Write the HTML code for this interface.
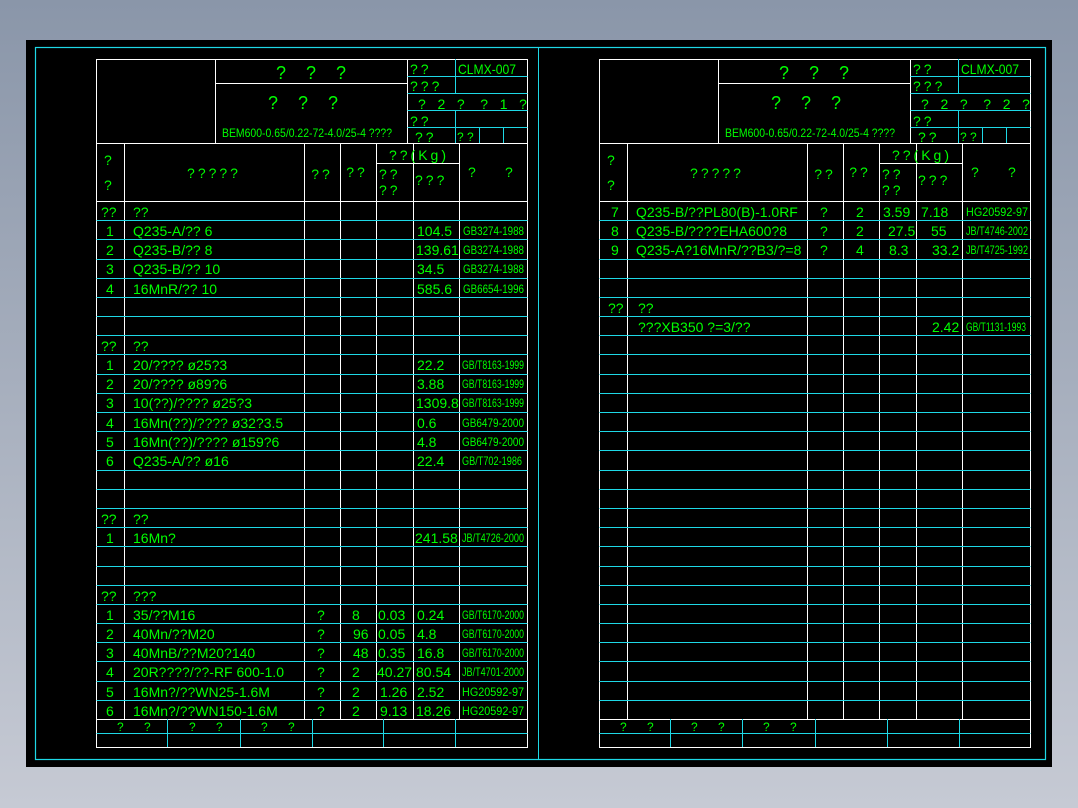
<!DOCTYPE html>
<html><head><meta charset="utf-8">
<style>
html,body{margin:0;padding:0}
body{width:1078px;height:808px;overflow:hidden;background:linear-gradient(#8a96a9,#c6cad4);}
svg{position:absolute;left:0;top:0}
text{font-family:"Liberation Sans Narrow","Liberation Sans",sans-serif;fill:#00ff00;font-size:14px;white-space:pre}
.h{font-size:18px}
.s{font-size:12px}
.w{letter-spacing:3px}
</style></head><body>
<svg width="1078" height="808" xmlns="http://www.w3.org/2000/svg">
<rect x="26" y="40" width="1026" height="727" fill="#000"/>
<rect x="35.5" y="47.5" width="1010" height="712" fill="none" stroke="#1ed8e6" stroke-width="1.2"/>
<line x1="538.5" y1="47" x2="538.5" y2="759" stroke="#1ed8e6"/>
<g id="grid"></g>

<!-- LEFT -->
<g>
<text class="h" x="311" y="79" text-anchor="middle">?    ?    ?</text>
<text class="h" x="303" y="109" text-anchor="middle">?    ?    ?</text>
<text class="s" x="222" y="137" textLength="170" lengthAdjust="spacingAndGlyphs">BEM600-0.65/0.22-72-4.0/25-4 ????</text>
<text x="410" y="74" class="w">??</text><text x="458" y="74" textLength="58" lengthAdjust="spacingAndGlyphs">CLMX-007</text>
<text x="410" y="91" class="w">???</text>
<text x="418" y="109">?   2   ?    ?   1   ?</text>
<text x="410" y="126" class="w">??</text>
<text x="415" y="142" class="w">??</text><text class="s" x="457" y="141">? ?</text>
<text x="104" y="165">?</text><text x="104" y="190">?</text>
<text x="214" y="178" text-anchor="middle" class="w">?????</text>
<text x="322" y="179" text-anchor="middle" class="w">??</text>
<text x="357" y="177" text-anchor="middle" class="w">??</text>
<text x="419" y="160" text-anchor="middle" class="w">??(Kg)</text>
<text x="379" y="179" class="w">??</text><text x="379" y="195" class="w">??</text>
<text x="415" y="185" class="w">???</text>
<text x="468" y="177">?</text><text x="505" y="177">?</text>
</g>

<!-- RIGHT header -->
<g transform="translate(503,0)">
<text class="h" x="311" y="79" text-anchor="middle">?    ?    ?</text>
<text class="h" x="303" y="109" text-anchor="middle">?    ?    ?</text>
<text class="s" x="222" y="137" textLength="170" lengthAdjust="spacingAndGlyphs">BEM600-0.65/0.22-72-4.0/25-4 ????</text>
<text x="410" y="74" class="w">??</text><text x="458" y="74" textLength="58" lengthAdjust="spacingAndGlyphs">CLMX-007</text>
<text x="410" y="91" class="w">???</text>
<text x="418" y="109">?   2   ?    ?   2   ?</text>
<text x="410" y="126" class="w">??</text>
<text x="415" y="142" class="w">??</text><text class="s" x="457" y="141">? ?</text>
<text x="104" y="165">?</text><text x="104" y="190">?</text>
<text x="214" y="178" text-anchor="middle" class="w">?????</text>
<text x="322" y="179" text-anchor="middle" class="w">??</text>
<text x="357" y="177" text-anchor="middle" class="w">??</text>
<text x="419" y="160" text-anchor="middle" class="w">??(Kg)</text>
<text x="379" y="179" class="w">??</text><text x="379" y="195" class="w">??</text>
<text x="415" y="185" class="w">???</text>
<text x="468" y="177">?</text><text x="505" y="177">?</text>
</g>

<!-- LEFT rows text -->
<g>
<text x="101" y="217">??</text><text x="133" y="217">??</text>
<text x="106" y="236">1</text><text x="133" y="236">Q235-A/?? 6</text><text x="417" y="236">104.5</text><text class="s" x="463" y="235" textLength="61" lengthAdjust="spacingAndGlyphs">GB3274-1988</text>
<text x="106" y="255">2</text><text x="133" y="255">Q235-B/?? 8</text><text x="416" y="255">139.61</text><text class="s" x="463" y="254" textLength="61" lengthAdjust="spacingAndGlyphs">GB3274-1988</text>
<text x="106" y="274">3</text><text x="133" y="274">Q235-B/?? 10</text><text x="417" y="274">34.5</text><text class="s" x="463" y="273" textLength="61" lengthAdjust="spacingAndGlyphs">GB3274-1988</text>
<text x="106" y="294">4</text><text x="133" y="294">16MnR/?? 10</text><text x="417" y="294">585.6</text><text class="s" x="463" y="293" textLength="61" lengthAdjust="spacingAndGlyphs">GB6654-1996</text>
<text x="101" y="351">??</text><text x="133" y="351">??</text>
<text x="106" y="370">1</text><text x="133" y="370">20/???? ø25?3</text><text x="417" y="370">22.2</text><text class="s" x="462" y="369" textLength="62" lengthAdjust="spacingAndGlyphs">GB/T8163-1999</text>
<text x="106" y="389">2</text><text x="133" y="389">20/???? ø89?6</text><text x="417" y="389">3.88</text><text class="s" x="462" y="388" textLength="62" lengthAdjust="spacingAndGlyphs">GB/T8163-1999</text>
<text x="106" y="408">3</text><text x="133" y="408">10(??)/???? ø25?3</text><text x="416" y="408">1309.8</text><text class="s" x="462" y="407" textLength="62" lengthAdjust="spacingAndGlyphs">GB/T8163-1999</text>
<text x="106" y="428">4</text><text x="133" y="428">16Mn(??)/???? ø32?3.5</text><text x="417" y="428">0.6</text><text class="s" x="462" y="427" textLength="62" lengthAdjust="spacingAndGlyphs">GB6479-2000</text>
<text x="106" y="447">5</text><text x="133" y="447">16Mn(??)/???? ø159?6</text><text x="417" y="447">4.8</text><text class="s" x="462" y="446" textLength="62" lengthAdjust="spacingAndGlyphs">GB6479-2000</text>
<text x="106" y="466">6</text><text x="133" y="466">Q235-A/?? ø16</text><text x="417" y="466">22.4</text><text class="s" x="462" y="465" textLength="60" lengthAdjust="spacingAndGlyphs">GB/T702-1986</text>
<text x="101" y="524">??</text><text x="133" y="524">??</text>
<text x="106" y="543">1</text><text x="133" y="543">16Mn?</text><text x="415" y="543">241.58</text><text class="s" x="462" y="542" textLength="62" lengthAdjust="spacingAndGlyphs">JB/T4726-2000</text>
<text x="101" y="601">??</text><text x="133" y="601">???</text>
<text x="106" y="620">1</text><text x="133" y="620">35/??M16</text><text x="317" y="620">?</text><text x="352" y="620">8</text><text x="378" y="620">0.03</text><text x="417" y="620">0.24</text><text class="s" x="462" y="619" textLength="62" lengthAdjust="spacingAndGlyphs">GB/T6170-2000</text>
<text x="106" y="639">2</text><text x="133" y="639">40Mn/??M20</text><text x="317" y="639">?</text><text x="353" y="639">96</text><text x="378" y="639">0.05</text><text x="417" y="639">4.8</text><text class="s" x="462" y="638" textLength="62" lengthAdjust="spacingAndGlyphs">GB/T6170-2000</text>
<text x="106" y="658">3</text><text x="133" y="658">40MnB/??M20?140</text><text x="317" y="658">?</text><text x="353" y="658">48</text><text x="378" y="658">0.35</text><text x="417" y="658">16.8</text><text class="s" x="462" y="657" textLength="62" lengthAdjust="spacingAndGlyphs">GB/T6170-2000</text>
<text x="106" y="677">4</text><text x="133" y="677">20R????/??-RF 600-1.0</text><text x="317" y="677">?</text><text x="352" y="677">2</text><text x="377" y="677">40.27</text><text x="416" y="677">80.54</text><text class="s" x="462" y="676" textLength="62" lengthAdjust="spacingAndGlyphs">JB/T4701-2000</text>
<text x="106" y="697">5</text><text x="133" y="697">16Mn?/??WN25-1.6M</text><text x="317" y="697">?</text><text x="352" y="697">2</text><text x="380" y="697">1.26</text><text x="417" y="697">2.52</text><text class="s" x="462" y="696" textLength="62" lengthAdjust="spacingAndGlyphs">HG20592-97</text>
<text x="106" y="716">6</text><text x="133" y="716">16Mn?/??WN150-1.6M</text><text x="317" y="716">?</text><text x="352" y="716">2</text><text x="380" y="716">9.13</text><text x="416" y="716">18.26</text><text class="s" x="462" y="715" textLength="62" lengthAdjust="spacingAndGlyphs">HG20592-97</text>
<text class="s" x="117" y="731">?</text><text class="s" x="144" y="731">?</text>
<text class="s" x="189" y="731">?</text><text class="s" x="216" y="731">?</text>
<text class="s" x="261" y="731">?</text><text class="s" x="288" y="731">?</text>
</g>

<!-- RIGHT rows text -->
<g>
<text x="611" y="217">7</text><text x="636" y="217">Q235-B/??PL80(B)-1.0RF</text><text x="820" y="217">?</text><text x="856" y="217">2</text><text x="883" y="217">3.59</text><text x="921" y="217">7.18</text><text class="s" x="966" y="216" textLength="62" lengthAdjust="spacingAndGlyphs">HG20592-97</text>
<text x="611" y="236">8</text><text x="636" y="236">Q235-B/????EHA600?8</text><text x="820" y="236">?</text><text x="856" y="236">2</text><text x="888" y="236">27.5</text><text x="931" y="236">55</text><text class="s" x="966" y="235" textLength="62" lengthAdjust="spacingAndGlyphs">JB/T4746-2002</text>
<text x="611" y="255">9</text><text x="636" y="255">Q235-A?16MnR/??B3/?=8</text><text x="820" y="255">?</text><text x="856" y="255">4</text><text x="889" y="255">8.3</text><text x="932" y="255">33.2</text><text class="s" x="966" y="254" textLength="62" lengthAdjust="spacingAndGlyphs">JB/T4725-1992</text>
<text x="608" y="313">??</text><text x="638" y="313">??</text>
<text x="638" y="332">???XB350 ?=3/??</text><text x="932" y="332">2.42</text><text class="s" x="966" y="331" textLength="60" lengthAdjust="spacingAndGlyphs">GB/T1131-1993</text>
<text class="s" x="620" y="731">?</text><text class="s" x="647" y="731">?</text>
<text class="s" x="691" y="731">?</text><text class="s" x="718" y="731">?</text>
<text class="s" x="763" y="731">?</text><text class="s" x="790" y="731">?</text>
</g>
</svg>
<script>
(function(){
var ns="http://www.w3.org/2000/svg",g=document.getElementById("grid");
var W="#ffffff",C="#1ed8e6";
function L(x1,y1,x2,y2,c){var l=document.createElementNS(ns,"line");
l.setAttribute("x1",x1);l.setAttribute("y1",y1);l.setAttribute("x2",x2);l.setAttribute("y2",y2);
l.setAttribute("stroke",c);l.setAttribute("stroke-width","1");g.appendChild(l);}
function table(o,fcols){
 var X=function(v){return v+o+0.5};
 L(X(0),59.5,X(431),59.5,W);L(X(0),59,X(0),748,W);L(X(431),59,X(431),748,W);L(X(0),747.5,X(431),747.5,W);
 L(X(119),59,X(119),143,W);L(X(311),59,X(311),143,W);L(X(119),83.5,X(311),83.5,W);
 L(X(0),143.5,X(431),143.5,W);
 [76.5,93.5,110.5,127.5].forEach(function(y){L(X(311),y,X(431),y,C);});
 L(X(359),59,X(359),93,C);L(X(359),110,X(359),143,C);L(X(383),127,X(383),143,C);L(X(407),127,X(407),143,C);
 var cols=[28,208,244,280,317,363];
 cols.forEach(function(c){L(X(c),143,X(c),719,W);});
 L(X(280),163.5,X(363),163.5,W);
 L(X(0),201.5,X(431),201.5,W);
 for(var i=1;i<27;i++){var y=Math.round(201+i*19.185)+0.5;L(X(0),y,X(431),y,C);}
 L(X(0),719.5,X(431),719.5,W);
 L(X(0),733.5,X(431),733.5,C);
 fcols.forEach(function(c){L(X(c),719,X(c),747,C);});
}
table(96,[71,144,216,287,359]);
table(599,[71,143,216,288,360]);
})();
</script>
</body></html>
